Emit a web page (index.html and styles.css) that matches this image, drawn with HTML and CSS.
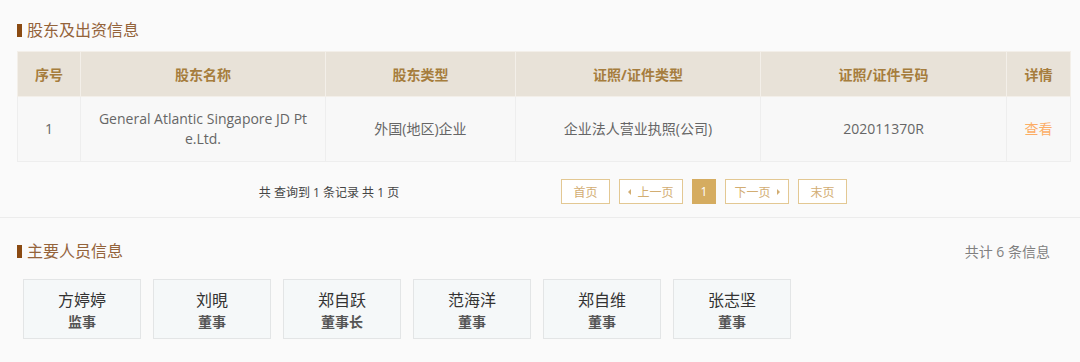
FILE: index.html
```html
<!DOCTYPE html>
<html lang="zh">
<head>
<meta charset="utf-8">
<link rel="stylesheet" href="styles.css">
</head>
<body>
<section class="section section-top">
  <h2 class="title">股东及出资信息</h2>
  <table class="grid">
    <colgroup>
      <col class="c1"><col class="c2"><col class="c3"><col class="c4"><col class="c5"><col class="c6">
    </colgroup>
    <thead>
      <tr><th>序号</th><th>股东名称</th><th>股东类型</th><th>证照/证件类型</th><th>证照/证件号码</th><th>详情</th></tr>
    </thead>
    <tbody>
      <tr>
        <td>1</td>
        <td class="name">General Atlantic Singapore JD Pte.Ltd.</td>
        <td>外国(地区)企业</td>
        <td>企业法人营业执照(公司)</td>
        <td>202011370R</td>
        <td><a class="link">查看</a></td>
      </tr>
    </tbody>
  </table>
  <div class="pager">
    <div class="pager-info">共 查询到 1 条记录 共 1 页</div>
    <div class="pager-btns">
      <span class="pbtn w49">首页</span>
      <span class="pbtn w64"><i class="tri tri-l"></i>上一页</span>
      <span class="pbtn cur">1</span>
      <span class="pbtn w64">下一页<i class="tri tri-r"></i></span>
      <span class="pbtn w49">末页</span>
    </div>
  </div>
</section>
<section class="section section-bottom">
  <div class="head-row">
    <h2 class="title">主要人员信息</h2>
    <span class="count">共计 6 条信息</span>
  </div>
  <div class="cards">
    <div class="card"><div class="pname">方婷婷</div><div class="role">监事</div></div>
    <div class="card"><div class="pname">刘晛</div><div class="role">董事</div></div>
    <div class="card"><div class="pname">郑自跃</div><div class="role">董事长</div></div>
    <div class="card"><div class="pname">范海洋</div><div class="role">董事</div></div>
    <div class="card"><div class="pname">郑自维</div><div class="role">董事</div></div>
    <div class="card"><div class="pname">张志坚</div><div class="role">董事</div></div>
  </div>
</section>
</body>
</html>
```

FILE: styles.css
```css
html, body {
  margin: 0;
  padding: 0;
  background: #fafafa;
  font-family: "Open Sans", "Noto Sans CJK SC", sans-serif;
  color: #666;
  font-size: 14px;
}
.section {
  padding: 0 10px 0 17px;
}
.section-top {
  padding-top: 20px;
  padding-bottom: 13px;
  border-bottom: 1px solid #ececec;
}
.section-bottom {
  padding-top: 23px;
}
.title {
  margin: 0;
  font-size: 16px;
  font-weight: normal;
  line-height: 20px;
  color: #94633a;
  display: flex;
  align-items: center;
}
.title::before {
  content: "";
  width: 5px;
  height: 13px;
  background: #8a4a12;
  margin-right: 5px;
}
.grid {
  margin-top: 11px;
  width: 1053px;
  border-collapse: collapse;
  table-layout: fixed;
}
.c1 { width: 63px; }
.c2 { width: 245px; }
.c3 { width: 190px; }
.c4 { width: 245px; }
.c5 { width: 246px; }
.c6 { width: 64px; }
.grid th {
  height: 44px;
  background: #e8e2d8;
  color: #a67d3d;
  font-weight: bold;
  font-size: 14px;
  border: 1px solid #f3efe9;
  padding: 0;
}
.grid td {
  height: 64px;
  background: #f8f8f8;
  border: 1px solid #eeeeee;
  text-align: center;
  padding: 0;
  line-height: 20px;
  color: #666;
}
.grid td.name {
  padding: 0 14px;
  word-break: break-all;
}
.link {
  color: #fcae66;
}
.pager {
  display: flex;
  align-items: center;
  margin-top: 17px;
  height: 25px;
}
.pager-info {
  width: 400px;
  margin-left: 112px;
  text-align: center;
  font-size: 12px;
  color: #444;
}
.pager-btns {
  display: flex;
  gap: 9px;
  margin-left: 32px;
}
.pbtn {
  box-sizing: border-box;
  height: 25px;
  border: 1px solid #e3c893;
  color: #d2ad72;
  font-size: 12px;
  display: flex;
  align-items: center;
  justify-content: center;
  background: #fff;
}
.w49 { width: 49px; }
.w64 { width: 64px; }
.pbtn.cur {
  width: 24px;
  background: #d5ac60;
  border-color: #d5ac60;
  color: #fff;
}
.tri {
  width: 0;
  height: 0;
  border-top: 3px solid transparent;
  border-bottom: 3px solid transparent;
}
.tri-l { border-right: 3px solid #d2ad72; margin-right: 6px; }
.tri-r { border-left: 3px solid #d2ad72; margin-left: 6px; }
.head-row {
  display: flex;
  justify-content: space-between;
  align-items: center;
}
.count {
  color: #808080;
  font-size: 14px;
  margin-right: 20px;
}
.cards {
  display: flex;
  gap: 12px;
  margin-top: 18px;
  padding-left: 6px;
}
.card {
  box-sizing: border-box;
  width: 118px;
  height: 60px;
  padding-top: 3px;
  border: 1px solid #e3e5e6;
  background: #f5f8f9;
  display: flex;
  flex-direction: column;
  align-items: center;
  justify-content: center;
}
.pname {
  font-size: 16px;
  color: #333;
  line-height: 20px;
}
.role {
  font-size: 14px;
  font-weight: bold;
  color: #555;
  line-height: 20px;
  margin-top: 2px;
}
```
